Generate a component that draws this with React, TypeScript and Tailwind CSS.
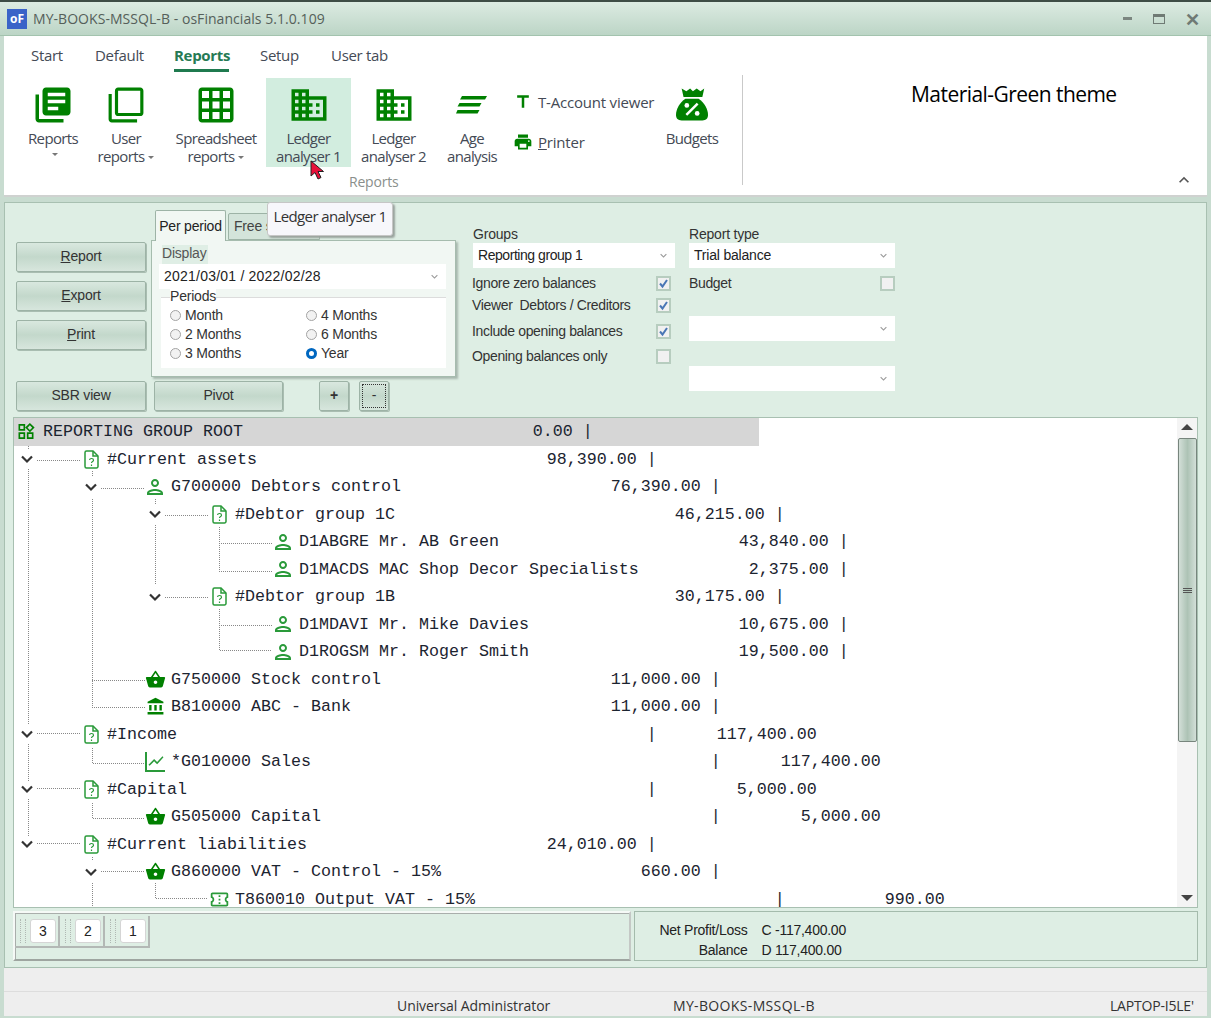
import type { ReactNode } from "react";
import {
  MdLibraryBooks,
  MdFilterNone,
  MdGridOn,
  MdDomain,
  MdTitle,
  MdPrint,
  MdAccountBalance,
  MdShoppingBasket,
  MdOutlinePerson,
  MdShowChart,
  MdOutlineConfirmationNumber,
  MdOutlineWidgets,
  MdKeyboardArrowDown,
  MdKeyboardArrowUp,
} from "react-icons/md";

const UI = "font-['Open_Sans',sans-serif]";
const FORM = "font-['Liberation_Sans',sans-serif]";

function Caret() {
  return <span className="ml-1 inline-block h-0 w-0 border-x-[3px] border-t-[3px] border-x-transparent border-t-[#777] align-middle" />;
}

function RibbonButton({ icon, lines, caret, className, hot }: { icon: ReactNode; lines: string[]; caret?: "inline" | "below"; className: string; hot?: boolean }) {
  return (
    <div className={`flex h-[89px] flex-col items-center ${className} ${hot ? "bg-[#d2eddf]" : ""}`}>
      <div className="flex h-[51px] items-center pt-[2px] text-[#008000]">{icon}</div>
      <div className="text-center text-[15px] leading-[18px] tracking-[-0.65px] text-[#444a55]">
        {lines.map((l, i) => (
          <div key={l}>
            {l}
            {caret === "inline" && i === lines.length - 1 && <Caret />}
          </div>
        ))}
        {caret === "below" && <div className="-mt-[3px]"><Caret /></div>}
      </div>
    </div>
  );
}

function AgeIcon() {
  return (
    <svg width="32" height="24" viewBox="0 0 32 24" fill="#008000">
      <path d="M6 3h25l-2 3.500H4z" />
      <path d="M3.500 10h22l-2 3.500H1.500z" />
      <path d="M1.500 17h22l-2 3.500H0z" />
    </svg>
  );
}

function BudgetIcon() {
  return (
    <svg width="32" height="35" viewBox="0 0 34 36">
      <path fill="#008000" d="M6 1l5 3 4-3 3 3 4-3 4 3 4-3-2 9H8z" />
      <path fill="#008000" d="M10 12h14c6 4 10 11 10 17 0 4-2 6-6 6H6c-4 0-6-2-6-6 0-6 4-13 10-17z" />
      <path stroke="#fff" strokeWidth="2.600" d="M11 29l12-12" />
      <circle cx="11.500" cy="19" r="2.500" fill="#fff" />
      <circle cx="22.500" cy="27.500" r="2.500" fill="#fff" />
    </svg>
  );
}

function Cursor() {
  return (
    <svg className="absolute left-[306px] top-[124px]" width="15" height="20" viewBox="0 0 15 20">
      <path d="M1 1v15l4-3.500 3 6.500 3-1.500-3-6h5.500z" fill="#e8103a" stroke="#222" strokeWidth="1" />
    </svg>
  );
}

function Ribbon() {
  return (
    <div className={`relative h-[161px] shrink-0 border-b-2 border-[#cfd2d0] bg-white ${UI}`}>
      <div className="flex h-[42px] pl-[27px] pt-[8px] text-[15px] tracking-[-0.3px] text-[#444a55]">
        <span className="w-[64px]">Start</span>
        <span className="w-[79px]">Default</span>
        <span className="flex h-[27px] w-[86px] flex-col">
          <span className="w-[55px] border-b-[3px] border-[#1f7a4f] pb-[2px] font-bold text-[#267a55]">Reports</span>
        </span>
        <span className="w-[71px]">Setup</span>
        <span>User tab</span>
      </div>
      <div className="flex pl-[20px]">
        <RibbonButton className="w-[58px]" icon={<MdLibraryBooks size={42} />} lines={["Reports"]} caret="below" />
        <RibbonButton className="w-[88px]" icon={<MdFilterNone size={38} />} lines={["User", "reports"]} caret="inline" />
        <RibbonButton className="w-[92px]" icon={<MdGridOn size={42} />} lines={["Spreadsheet", "reports"]} caret="inline" />
        <RibbonButton className="ml-[4px] w-[85px]" hot icon={<MdDomain size={42} />} lines={["Ledger", "analyser 1"]} />
        <RibbonButton className="w-[85px]" icon={<MdDomain size={42} />} lines={["Ledger", "analyser 2"]} />
        <RibbonButton className="w-[72px]" icon={<AgeIcon />} lines={["Age", "analysis"]} />
        <div className="ml-[5px] flex w-[147px] flex-col pt-[12px] text-[15px] tracking-[-0.2px] text-[#444a55]">
          <div className="flex h-[24px] items-center gap-[5px]">
            <MdTitle size={20} className="text-[#008000]" />
            <span>T-Account viewer</span>
          </div>
          <div className="mt-[16px] flex h-[24px] items-center gap-[5px]">
            <MdPrint size={20} className="text-[#008000]" />
            <span><u>P</u>rinter</span>
          </div>
        </div>
        <RibbonButton className="w-[64px]" icon={<BudgetIcon />} lines={["Budgets"]} />
        <div className="ml-[18px] mt-[-3px] h-[110px] w-[1px] bg-[#c9c9c9]" />
        <div className="ml-[168px] pt-[1px] text-[21px] tracking-[-0.55px] text-black">Material-Green theme</div>
      </div>
      <div className="-mt-[12px] pl-[345px] text-[14px] leading-[18px] tracking-[-0.2px] text-[#8a8f8c]">Reports</div>
      <MdKeyboardArrowUp size={20} className="absolute left-[1170px] top-[134px] text-[#555]" />
      <Cursor />
    </div>
  );
}

function GreenButton({ children, className }: { children: ReactNode; className: string }) {
  return (
    <div className={`flex h-[30px] items-center justify-center rounded-[2px] border border-[#9db3a6] bg-gradient-to-b from-[#d9e8df] via-[#c3d8cb] to-[#d7e6dd] pb-[1px] text-[14px] tracking-[-0.2px] text-[#333] shadow-[1px_1px_0_#a9bdb1] ${className}`}>
      {children}
    </div>
  );
}

function Combo({ value, className }: { value?: ReactNode; className: string }) {
  return (
    <div className={`flex h-[25px] items-center justify-between bg-white pl-[5px] pr-[5px] text-[14px] tracking-[-0.45px] text-[#222] ${className}`}>
      <span>{value}</span>
      <MdKeyboardArrowDown size={13} className="text-[#9a9a9a]" />
    </div>
  );
}

function Radio({ label, on }: { label: string; on?: boolean }) {
  return (
    <div className="flex h-[19px] items-center gap-[4px] text-[14px] tracking-[-0.2px] text-[#333]">
      {on ? (
        <span className="h-[11px] w-[11px] rounded-full border-[3px] border-[#0067c0] bg-white" />
      ) : (
        <span className="h-[11px] w-[11px] rounded-full border border-[#a3a3a3] bg-[#f2f2f2]" />
      )}
      {label}
    </div>
  );
}

function Check({ on }: { on?: boolean }) {
  return (
    <span className="flex h-[15px] w-[15px] items-center justify-center border-2 border-[#b7cdbf] bg-[#f1f1f1]">
      {on && (
        <svg width="11" height="11" viewBox="0 0 11 11">
          <path d="M2 5.500l2.500 3L9 2" fill="none" stroke="#4a76b5" strokeWidth="2" />
        </svg>
      )}
    </span>
  );
}

function CheckRow({ label, on, className }: { label: string; on?: boolean; className: string }) {
  return (
    <div className={`flex h-[20px] items-center justify-between whitespace-pre text-[14px] tracking-[-0.35px] text-[#333] ${className}`}>
      <span>{label}</span>
      <Check on={on} />
    </div>
  );
}

function TabPanel() {
  return (
    <div className="ml-[5px] w-[305px]">
      <div className="flex h-[30px] items-end pl-[4px] text-[14px] tracking-[-0.2px]">
        <div className="z-10 -mb-[1px] flex h-[31px] w-[71px] items-center justify-center rounded-t-[2px] border border-b-0 border-[#9db3a6] bg-[#f1f7f3] text-[#222]">Per period</div>
        <div className="ml-[2px] flex h-[27px] w-[92px] items-center rounded-t-[2px] border border-[#9db3a6] bg-[#d3e4da] pl-[5px] text-[#444]">Free s</div>
      </div>
      <div className="h-[137px] border border-[#a6bcae] bg-[#f1f7f3] pl-[7px] pr-[9px] pt-[4px] shadow-[2px_2px_2px_#a8b8ae]">
        <div className="ml-[3px] h-[19px] w-fit bg-[#dfeee5] pr-[1px] text-[14px] leading-[16px] tracking-[-0.2px] text-[#555]">Display</div>
        <Combo className="" value={<span className="tracking-[0.22px]">2021/03/01 / 2022/02/28</span>} />
        <div className="ml-[2px] mt-[8px] h-[71px] border-t border-[#dcdcdc] bg-white pl-[9px] pt-[8px]">
          <div className="-mt-[18px] mb-[1px] w-fit bg-white text-[14px] leading-[16px] tracking-[-0.2px] text-[#333]">Periods</div>
          <div className="mt-[2px] flex">
            <div className="w-[136px]">
              <Radio label="Month" />
              <Radio label="2 Months" />
              <Radio label="3 Months" />
            </div>
            <div>
              <Radio label="4 Months" />
              <Radio label="6 Months" />
              <Radio label="Year" on />
            </div>
          </div>
        </div>
      </div>
    </div>
  );
}

function Filters() {
  return (
    <div className={`relative flex h-[214px] shrink-0 pl-[11px] pt-[7px] ${FORM}`}>
      <div className="w-[450px]">
        <div className="flex">
          <div className="flex w-[130px] flex-col gap-[9px] pt-[32px]">
            <GreenButton className=""><span><u>R</u>eport</span></GreenButton>
            <GreenButton className=""><span><u>E</u>xport</span></GreenButton>
            <GreenButton className=""><span><u>P</u>rint</span></GreenButton>
          </div>
          <TabPanel />
        </div>
        <div className="mt-[4px] flex items-start">
          <GreenButton className="w-[130px]">SBR view</GreenButton>
          <GreenButton className="ml-[8px] w-[129px]">Pivot</GreenButton>
          <GreenButton className="ml-[36px] w-[30px] font-bold">+</GreenButton>
          <GreenButton className="ml-[10px] w-[30px] outline-1 -outline-offset-4 outline-dotted outline-[#333]">-</GreenButton>
        </div>
      </div>
      <div className="ml-[6px] w-[204px] pt-[16px]">
        <div className="h-[17px] pl-[1px] text-[14px] leading-[16px] tracking-[-0.2px] text-[#333]">Groups</div>
        <Combo className="ml-[1px] w-[202px]" value="Reporting group 1" />
        <CheckRow className="mt-[5px] w-[199px]" label="Ignore zero balances" on />
        <CheckRow className="mt-[2px] w-[199px]" label="Viewer  Debtors / Creditors" on />
        <CheckRow className="mt-[6px] w-[199px]" label="Include opening balances" on />
        <CheckRow className="mt-[5px] w-[199px]" label="Opening balances only" />
      </div>
      <div className="ml-[13px] w-[206px] pt-[16px]">
        <div className="h-[17px] text-[14px] leading-[16px] tracking-[-0.2px] text-[#333]">Report type</div>
        <Combo className="" value={<span className="tracking-[-0.2px]">Trial balance</span>} />
        <CheckRow className="mt-[5px]" label="Budget" />
        <Combo className="mt-[23px]" />
        <Combo className="mt-[25px]" />
      </div>
      <div className={`absolute left-[262px] -top-px flex h-[34px] w-[126px] items-center justify-center rounded-[3px] border border-[#c6c6c6] bg-[#f7f7fb] pb-[6px] text-[15px] tracking-[-0.6px] text-[#333] shadow-[2px_2px_2px_#9aa39e] ${UI}`}>
        Ledger analyser 1
      </div>
    </div>
  );
}

function DocIcon() {
  return (
    <svg width="15" height="19" viewBox="0 0 15 19" fill="none" stroke="#2a9a3a" strokeWidth="1.500">
      <path d="M2.500 1h6.500l5 5v10.500a1.500 1.500 0 0 1-1.500 1.500h-10A1.500 1.500 0 0 1 1 16.500v-14A1.500 1.500 0 0 1 2.500 1z" />
      <path d="M9 1v5h5" />
      <path d="M5.500 10c.3-2 4-2 4 .2 0 1.400-2 1.300-2 2.800M7.500 14.500v1.500" strokeWidth="1.200" />
    </svg>
  );
}

function Chevron() {
  return (
    <svg width="20" height="20" viewBox="0 0 20 20" fill="none" stroke="#333" strokeWidth="2.200">
      <path d="M5 7.500l5 5 5-5" />
    </svg>
  );
}

type IconKind = "root" | "doc" | "person" | "basket" | "bank" | "chart" | "ticket";

function RowIcon({ kind }: { kind: IconKind }) {
  if (kind === "root") return <MdOutlineWidgets size={21} className="text-[#008000]" />;
  if (kind === "doc") return <DocIcon />;
  if (kind === "person") return <MdOutlinePerson size={24} className="shrink-0 text-[#2a9a3a]" />;
  if (kind === "basket") return <MdShoppingBasket size={21} className="shrink-0 text-[#008000]" />;
  if (kind === "bank") return <MdAccountBalance size={19} className="text-[#008000]" />;
  if (kind === "chart") return <MdShowChart size={20} className="border-b-2 border-l-2 border-[#2a9a3a] text-[#2a9a3a]" />;
  return <MdOutlineConfirmationNumber size={21} className="shrink-0 text-[#2a9a3a]" />;
}

type Row = { depth: number; icon: IconKind; name: string; debit?: string; credit?: string; open?: boolean };

const ROWS: Row[] = [
  { depth: 0, icon: "doc", name: "#Current assets", debit: "98,390.00", open: true },
  { depth: 1, icon: "person", name: "G700000 Debtors control", debit: "76,390.00", open: true },
  { depth: 2, icon: "doc", name: "#Debtor group 1C", debit: "46,215.00", open: true },
  { depth: 3, icon: "person", name: "D1ABGRE Mr. AB Green", debit: "43,840.00" },
  { depth: 3, icon: "person", name: "D1MACDS MAC Shop Decor Specialists", debit: "2,375.00" },
  { depth: 2, icon: "doc", name: "#Debtor group 1B", debit: "30,175.00", open: true },
  { depth: 3, icon: "person", name: "D1MDAVI Mr. Mike Davies", debit: "10,675.00" },
  { depth: 3, icon: "person", name: "D1ROGSM Mr. Roger Smith", debit: "19,500.00" },
  { depth: 1, icon: "basket", name: "G750000 Stock control", debit: "11,000.00" },
  { depth: 1, icon: "bank", name: "B810000 ABC - Bank", debit: "11,000.00" },
  { depth: 0, icon: "doc", name: "#Income", credit: "117,400.00", open: true },
  { depth: 1, icon: "chart", name: "*G010000 Sales", credit: "117,400.00" },
  { depth: 0, icon: "doc", name: "#Capital", credit: "5,000.00", open: true },
  { depth: 1, icon: "basket", name: "G505000 Capital", credit: "5,000.00" },
  { depth: 0, icon: "doc", name: "#Current liabilities", debit: "24,010.00", open: true },
  { depth: 1, icon: "basket", name: "G860000 VAT - Control - 15%", debit: "660.00", open: true },
  { depth: 2, icon: "ticket", name: "T860010 Output VAT - 15%", credit: "990.00" },
];

const PADS = ["pl-[3px]", "pl-[67px]", "pl-[131px]", "pl-[195px]"];

function rowLine(r: Row) {
  if (r.debit) return r.name.padEnd(53 - r.debit.length) + r.debit + " |";
  return (r.name.padEnd(54) + "|").padEnd(71 - (r.credit ?? "").length) + r.credit;
}

// dotted connectors of the tree, in the tree box's own coordinates
const CONNECTORS = [
  "M14 28V31", "M14 51V306", "M14 326V363", "M14 381V419",
  "M23 42H68", "M23 315H68", "M23 370H68", "M23 425H68",
  "M78 53V59", "M78 81V289", "M78 330V345H131", "M78 385V400H131", "M78 439V443", "M78 465V490",
  "M78 262H131", "M78 289H131",
  "M87 70H131", "M87 453H131",
  "M141 81V86", "M141 107V167", "M141 465V480H194",
  "M151 97H195", "M151 179H195",
  "M205 109V153H258", "M205 125H258", "M205 191V232H258", "M205 207H258",
];

function Tree() {
  return (
    <div className="relative mx-[8px] flex h-[491px] shrink-0 overflow-hidden border border-[#a8c0b1] bg-white">
      <div className="relative min-w-0 flex-1 font-['Liberation_Mono',monospace] text-[16.67px] text-[#1c2430]">
        <svg className="absolute left-0 top-0" width="300" height="490" fill="none" stroke="#888" strokeWidth="1" strokeDasharray="1 1" shapeRendering="crispEdges">
          {CONNECTORS.map((d) => (
            <path key={d} d={d} />
          ))}
        </svg>
        <div className="relative flex h-[27.5px] w-[745px] items-center bg-[#d6d6d6] pl-[2px] whitespace-pre">
          <span className="flex w-[20px] justify-center"><RowIcon kind="root" /></span>
          <span className="ml-[7px]">{"REPORTING GROUP ROOT".padEnd(49) + "0.00 |"}</span>
        </div>
        {ROWS.map((r) => (
          <div key={r.name} className={`relative flex h-[27.5px] items-center whitespace-pre ${PADS[r.depth]}`}>
            {r.open ? <Chevron /> : <span className="w-[20px]" />}
            <span className="w-[44px]" />
            <span className="flex w-[20px] justify-center bg-white"><RowIcon kind={r.icon} /></span>
            <span className="ml-[6px]">{rowLine(r)}</span>
          </div>
        ))}
      </div>
      <div className="flex w-[20px] shrink-0 flex-col items-center bg-[#f4f4f4]">
        <span className="mt-[6px] h-0 w-0 border-x-[6px] border-b-[6px] border-x-transparent border-b-[#444]" />
        <div className="mt-[8px] flex h-[304px] w-[19px] flex-col items-center justify-center gap-[1px] rounded-[2px] border border-[#77857d] bg-gradient-to-r from-[#d3dfd8] via-[#adc3b5] to-[#d3dfd8]">
          <span className="h-[1px] w-[9px] bg-[#555]" />
          <span className="h-[1px] w-[9px] bg-[#555]" />
          <span className="h-[1px] w-[9px] bg-[#555]" />
        </div>
        <span className="mt-[153px] h-0 w-0 border-x-[6px] border-t-[6px] border-x-transparent border-t-[#444]" />
      </div>
    </div>
  );
}

function LevelButton({ n }: { n: string }) {
  return (
    <div className="flex h-[32px] w-[45px] items-center border-r-2 border-b-2 border-[#b3b8b5] pl-[5px]">
      <span className="h-[24px] w-[6px] border-x border-dotted border-[#b0b8b3]" />
      <span className="ml-[4px] flex h-[24px] w-[26px] items-center justify-center rounded-[3px] border border-[#d5d5d5] bg-white text-[14px] text-[#222]">{n}</span>
    </div>
  );
}

function Totals() {
  return (
    <div className={`mx-[8px] mt-[3px] flex h-[51px] shrink-0 ${FORM}`}>
      <div className="flex h-[50px] w-[619px] items-start border-2 border-[#f5f9f6] border-r-[#c4c8c5] border-b-[#9ea5a0] pt-[3px] shadow-[inset_1px_1px_0_#a9aeab]">
        <LevelButton n="3" />
        <LevelButton n="2" />
        <LevelButton n="1" />
      </div>
      <div className="ml-[3px] grid h-[50px] w-[564px] grid-cols-[112px_1fr] content-center gap-x-[14px] gap-y-[4px] border border-[#a4bbac] pt-[7px] text-[14px] leading-[16px] tracking-[-0.25px] text-[#222]">
        <span className="text-right">Net Profit/Loss</span>
        <span>C -117,400.00</span>
        <span className="text-right">Balance</span>
        <span>D 117,400.00</span>
      </div>
    </div>
  );
}

export default function App() {
  return (
    <div className="flex h-[1018px] w-[1211px] flex-col overflow-hidden border-t-2 border-[#3e4d46] bg-[#c8dcd0] pl-[4px] pr-[4px]">
      <div className={`-mx-[4px] flex h-[34px] shrink-0 items-center border-b border-[#a3c3ae] bg-gradient-to-b from-[#dcebe2] to-[#bcd5c6] pl-[7px] ${UI}`}>
        <span className="flex h-[20px] w-[20px] items-center justify-center bg-[#3a63c8] text-[12px] font-bold leading-none text-white">oF</span>
        <span className="ml-[6px] text-[14px] tracking-[0.05px] text-[#555f5a]">MY-BOOKS-MSSQL-B - osFinancials 5.1.0.109</span>
        <div className="ml-auto mr-[11px] flex items-center text-[#6f7a74]">
          <span className="h-[3px] w-[9px] bg-[#7b8680]" />
          <span className="ml-[21px] h-[10px] w-[12px] border border-t-[3px] border-[#6f7a74]" />
          <span className="ml-[20px] text-[18px] font-bold leading-none">✕</span>
        </div>
      </div>
      <Ribbon />
      <div className="mt-[5px] flex h-[766px] shrink-0 flex-col border border-[#a8c0b1] bg-[#deeee4]">
        <Filters />
        <Tree />
        <Totals />
      </div>
      <div className="flex h-[24px] shrink-0 border-b border-[#dddddd] bg-[#eeeeee]" />
      <div className={`relative flex h-[24px] shrink-0 items-center bg-[#eeeeee] pt-[3px] text-[14px] text-[#333] ${UI}`}>
        <span className="ml-[393px] w-[276px] tracking-[-0.07px]">Universal Administrator</span>
        <span className="w-[437px] tracking-[0.35px]">MY-BOOKS-MSSQL-B</span>
        <span className="tracking-[-0.2px]">LAPTOP-I5LE'</span>
      </div>
    </div>
  );
}
